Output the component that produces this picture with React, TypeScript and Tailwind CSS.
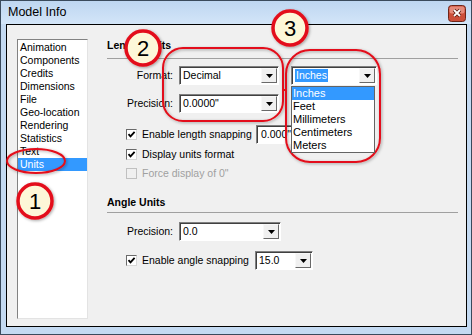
import React from "react";

const listItems = [
  "Animation",
  "Components",
  "Credits",
  "Dimensions",
  "File",
  "Geo-location",
  "Rendering",
  "Statistics",
  "Text",
  "Units",
];

const unitOptions = ["Inches", "Feet", "Millimeters", "Centimeters", "Meters"];

function Arrow() {
  return (
    <div className="w-[16px] h-full bg-[#f0f0f0] border-t border-l border-t-[#f8f8f8] border-l-[#f8f8f8] border-b border-r border-b-[#696969] border-r-[#696969] flex items-center justify-center">
      <svg width="7" height="4" viewBox="0 0 7 4">
        <path d="M0 0H7L3.5 4Z" fill="#000" />
      </svg>
    </div>
  );
}

function Combo({
  value,
  width,
  selected,
}: {
  value: string;
  width: string;
  selected?: boolean;
}) {
  return (
    <div
      className={`${width} h-[19px] bg-white border-t border-l border-t-[#808080] border-l-[#808080] border-b border-r border-b-[#ffffff] border-r-[#ffffff] shadow-[inset_1px_1px_0_#404040] flex items-stretch pt-[1px] pl-[1px] pr-[1px] pb-[1px]`}
    >
      <div className="flex-1 flex items-center pl-[2px]">
        <span
          className={
            selected ? "bg-[#3399ff] text-white px-[1px] leading-[13px]" : "leading-[13px]"
          }
        >
          {value}
        </span>
      </div>
      <Arrow />
    </div>
  );
}

function Checkbox({ checked, disabled }: { checked?: boolean; disabled?: boolean }) {
  return (
    <div
      className={`w-[11px] h-[11px] flex items-center justify-center border ${
        disabled
          ? "bg-[#f0f0f0] border-[#c0c0c0]"
          : "bg-white border-t-[#6a6a6a] border-l-[#6a6a6a] border-b-[#d8d8d8] border-r-[#d8d8d8]"
      }`}
    >
      {checked && (
        <svg width="9" height="9" viewBox="0 0 9 9">
          <path d="M1.5 4.2L3.5 6.4L7.6 1.8" stroke="#000" strokeWidth="1.8" fill="none" />
        </svg>
      )}
    </div>
  );
}

function CloseButton() {
  return (
    <svg width="18" height="17" viewBox="0 0 18 17" className="mt-[2px]">
      <rect x="0.5" y="0.5" width="17" height="16" rx="3" fill="#cc4f3a" stroke="#6e2519" />
      <rect x="1.5" y="1.5" width="15" height="7" rx="2" fill="#e58a7a" />
      <path d="M6 5L12 11M12 5L6 11" stroke="#5a1a10" strokeWidth="3.4" />
      <path d="M6 5L12 11M12 5L6 11" stroke="#ffffff" strokeWidth="1.8" />
    </svg>
  );
}

function Annotations() {
  return (
    <svg
      className="absolute left-0 top-0 pointer-events-none"
      width="472"
      height="335"
      viewBox="0 0 472 335"
    >
      <defs>
        <filter id="sh" x="-20%" y="-20%" width="140%" height="140%">
          <feDropShadow dx="1" dy="1" stdDeviation="1.6" floodColor="#000" floodOpacity="0.35" />
        </filter>
      </defs>
      <ellipse cx="36" cy="161" rx="29" ry="12" fill="none" stroke="#e3101a" strokeWidth="2" filter="url(#sh)" />
      <rect x="163" y="48" width="120" height="73" rx="20" fill="none" stroke="#e3101a" strokeWidth="2" filter="url(#sh)" />
      <rect x="286" y="50" width="94" height="112" rx="24" fill="none" stroke="#e3101a" strokeWidth="2" filter="url(#sh)" />
      <line x1="283" y1="90" x2="287" y2="90" stroke="#e3101a" strokeWidth="2" />
      {[
        { cx: 35, cy: 201, n: "1" },
        { cx: 143, cy: 48, n: "2" },
        { cx: 290, cy: 28, n: "3" },
      ].map((c) => (
        <g key={c.n}>
          <circle cx={c.cx} cy={c.cy} r="17" fill="#fdf7d8" stroke="#e3101a" strokeWidth="3.5" filter="url(#sh)" />
          <text
            x={c.cx}
            y={c.cy + 8}
            textAnchor="middle"
            fontFamily="Liberation Sans, Arial, sans-serif"
            fontSize="22"
            fill="#000"
          >
            {c.n}
          </text>
        </g>
      ))}
    </svg>
  );
}

export default function App() {
  return (
    <div className="relative w-[472px] h-[335px] font-['Liberation_Sans',Arial,sans-serif] text-[10.5px] text-black">
      <div className="w-full h-full border border-[#3a4a5c] bg-[#c4daf2] flex flex-col pl-[5px] pr-[4px] pb-[7px]">
        <div className="h-[23px] flex items-center justify-between bg-[linear-gradient(#bed6f1,#d3e5f8)] -ml-[5px] -mr-[4px] pl-[7px] pr-[5px]">
          <span className="text-[12.5px]">Model Info</span>
          <CloseButton />
        </div>
        <div className="flex-1 border border-black bg-[#f0f0f0] flex">
          {/* category list */}
          <div className="ml-[10px] mt-[14px] mb-[7px] w-[71px] bg-white border-t border-l border-t-[#828282] border-l-[#828282] border-b border-r border-b-[#e3e3e3] border-r-[#e3e3e3] pt-[1px]">
            {listItems.map((item) => (
              <div
                key={item}
                className={`h-[13px] leading-[13px] pl-[2px] ${
                  item === "Units" ? "bg-[#3399ff] text-white" : ""
                }`}
              >
                {item}
              </div>
            ))}
          </div>

          {/* settings */}
          <div className="ml-[19px] w-[351px] flex flex-col">
            <div className="mt-[14px] h-[13px] leading-[13px] font-bold">Length Units</div>
            <div className="mt-[6px] h-[1px] bg-[#a0a0a0]" />

            <div className="mt-[7px] h-[19px] flex items-center">
              <span className="w-[72px] text-right pr-[6px]">Format:</span>
              <Combo value="Decimal" width="w-[100px]" />
              <div className="relative ml-[12px]">
                <Combo value="Inches" width="w-[86px]" selected />
                <div className="absolute left-0 top-[20px] w-[84px] bg-white border border-[#646464] text-[11px] z-10">
                  {unitOptions.map((u) => (
                    <div
                      key={u}
                      className={`h-[13px] leading-[13px] pl-[1px] ${
                        u === "Inches" ? "bg-[#3399ff] text-white" : ""
                      }`}
                    >
                      {u}
                    </div>
                  ))}
                </div>
              </div>
            </div>

            <div className="mt-[9px] h-[19px] flex items-center">
              <span className="w-[72px] text-right pr-[6px] pl-[18px]">Precision:</span>
              <Combo value={'0.0000"'} width="w-[100px]" />
            </div>

            <div className="mt-[12px] h-[19px] flex items-center pl-[19px]">
              <Checkbox checked />
              <span className="ml-[5px] w-[114px]">Enable length snapping</span>
              <div className="w-[60px] h-[19px] bg-white border-t border-l border-t-[#808080] border-l-[#808080] border-b border-r border-b-white border-r-white shadow-[inset_1px_1px_0_#404040] flex items-center pl-[4px]">
                0.000"
              </div>
            </div>

            <div className="mt-[4px] h-[13px] flex items-center pl-[19px]">
              <Checkbox checked />
              <span className="ml-[5px]">Display units format</span>
            </div>

            <div className="mt-[6px] h-[13px] flex items-center pl-[19px] text-[#a0a0a0]">
              <Checkbox disabled />
              <span className="ml-[5px]">Force display of 0"</span>
            </div>

            <div className="mt-[16px] h-[13px] leading-[13px] font-bold">Angle Units</div>
            <div className="mt-[3px] h-[1px] bg-[#a0a0a0]" />

            <div className="mt-[9px] h-[19px] flex items-center">
              <span className="w-[72px] text-right pr-[6px] pl-[18px]">Precision:</span>
              <Combo value="0.0" width="w-[102px]" />
            </div>

            <div className="mt-[10px] h-[19px] flex items-center pl-[19px]">
              <Checkbox checked />
              <span className="ml-[5px] w-[113px]">Enable angle snapping</span>
              <Combo value="15.0" width="w-[58px]" />
            </div>
          </div>
        </div>
      </div>
      <Annotations />
    </div>
  );
}
